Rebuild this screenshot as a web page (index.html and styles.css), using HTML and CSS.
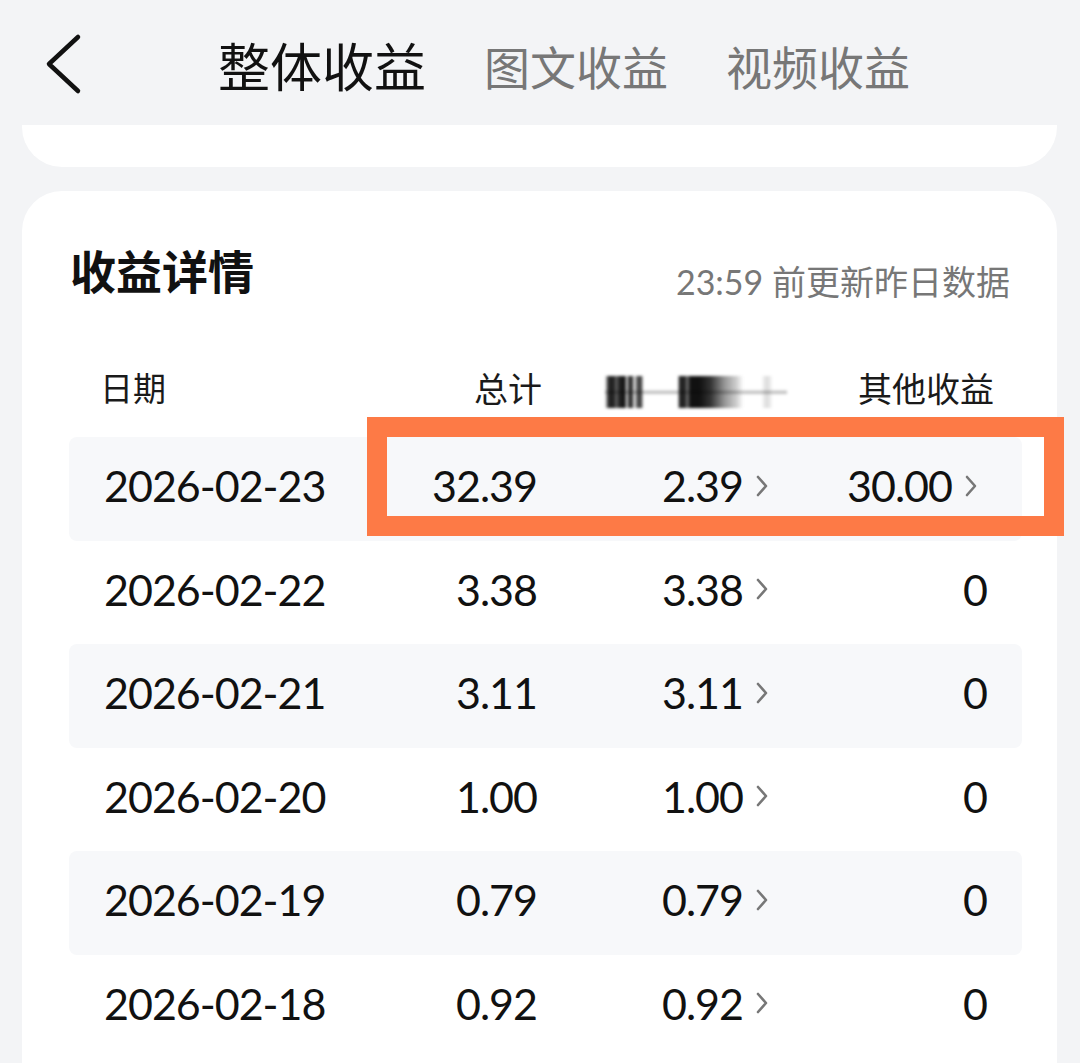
FILE: index.html
```html
<!DOCTYPE html>
<html lang="zh-CN">
<head>
    <meta charset="UTF-8">
    <meta name="viewport" content="width=device-width, initial-scale=1.0">
    <title>收益详情</title>
    <link rel="stylesheet" href="styles.css">
</head>
<body>

<div class="page">
    <!-- Top navigation with tabs -->
    <header class="topbar">
        <svg class="back" width="40" height="64" viewBox="0 0 40 64">
            <path d="M34 5 L5 32 L34 59" fill="none" stroke="#111" stroke-width="4.5" stroke-linecap="round" stroke-linejoin="round"/>
        </svg>
        <nav class="tabs">
            <span class="tab active">整体收益</span>
            <span class="tab">图文收益</span>
            <span class="tab">视频收益</span>
        </nav>
    </header>

    <div class="summary-card"></div>

    <div class="detail-card">
        <div class="detail-head">
            <h2 class="detail-title">收益详情</h2>
            <span class="detail-note">23:59 前更新昨日数据</span>
        </div>

        <div class="thead">
            <div class="th th-date">日期</div>
            <div class="th th-num">总计</div>
            <div class="th th-num"><span class="masked"></span></div>
            <div class="th th-num th-last">其他收益</div>
        </div>

        <div id="rows"></div>
    </div>

    <!-- highlight box drawn over the first row -->
    <div class="highlight"></div>
</div>

<script>
const data = [
    ['2026-02-23', '32.39', '2.39', '30.00'],
    ['2026-02-22', '3.38', '3.38', '0'],
    ['2026-02-21', '3.11', '3.11', '0'],
    ['2026-02-20', '1.00', '1.00', '0'],
    ['2026-02-19', '0.79', '0.79', '0'],
    ['2026-02-18', '0.92', '0.92', '0']
];

const chevron = '<svg class="chev" width="12" height="22" viewBox="0 0 12 22"><path d="M2 2 L10 11 L2 20" fill="none" stroke="#777" stroke-width="2.6" stroke-linecap="round" stroke-linejoin="round"/></svg>';

function renderRows() {
    const box = document.getElementById('rows');
    box.innerHTML = '';
    data.forEach((r, i) => {
        const row = document.createElement('div');
        row.classList.add('row');
        if (i % 2 === 0) row.classList.add('striped');
        const other = r[3] === '0'
            ? `<div class="td td-num">0</div>`
            : `<div class="td td-num td-other">${r[3]}${chevron}</div>`;
        row.innerHTML = `
            <div class="td td-date">${r[0]}</div>
            <div class="td td-num">${r[1]}</div>
            <div class="td td-num">${r[2]}${chevron}</div>
            ${other}
        `;
        box.appendChild(row);
    });
}

renderRows();
</script>

</body>
</html>
```

FILE: styles.css
```css
body {
    margin: 0;
    padding: 0;
    background-color: #f3f4f6;
    font-family: "Noto Sans CJK SC", "Noto Sans", sans-serif;
    color: #111;
}
.page {
    position: relative;
    width: 1080px;
    height: 1063px;
    overflow: hidden;
}
.topbar {
    height: 125px;
    display: flex;
    align-items: center;
    padding-top: 6px;
    box-sizing: border-box;
}
.back {
    margin-left: 44px;
    margin-top: -4px;
    flex: none;
}
.tabs {
    display: flex;
    align-items: center;
    gap: 58px;
    margin-left: 134px;
}
.tab {
    font-size: 46px;
    color: #777;
    line-height: 1.2;
}
.tab.active {
    font-size: 52px;
    color: #111;
}
.summary-card {
    margin: 0 23px 0 22px;
    height: 42px;
    background-color: #fff;
    border-radius: 0 0 40px 40px;
}
.detail-card {
    margin: 24px 23px 0 22px;
    padding: 51px 35px 0 47px;
    background-color: #fff;
    border-radius: 40px 40px 0 0;
    height: 900px;
}
.detail-head {
    display: flex;
    justify-content: space-between;
    align-items: flex-start;
    height: 54px;
}
.detail-title {
    margin: 0 0 0 1px;
    font-size: 46px;
    line-height: 54px;
    font-weight: 700;
    color: #111;
}
.detail-note {
    margin-top: 20px;
    margin-right: 12px;
    font-family: Lato, "Noto Sans CJK SC", sans-serif;
    font-size: 34px;
    line-height: 40px;
    color: #777;
}
.thead, .row {
    display: grid;
    grid-template-columns: 262px 173px 233px 1fr;
    align-items: center;
    padding: 0 35px 0 33px;
}
.thead {
    margin-top: 47px;
    height: 94px;
    padding-bottom: 6px;
    box-sizing: border-box;
}
.th {
    font-size: 34px;
    color: #1a1a1a;
}
.th-date {
    margin-left: -2px;
    font-size: 33px;
}
.th-num {
    text-align: right;
    margin-right: -5px;
}
.th-last {
    margin-right: -7px;
}
.masked {
    display: inline-block;
    width: 182px;
    height: 32px;
    margin-right: -12px;
    vertical-align: middle;
    filter: blur(1.4px);
    background:
        linear-gradient(180deg, transparent 44%, rgba(0,0,0,0.25) 48%, rgba(0,0,0,0.25) 54%, transparent 58%),
        linear-gradient(90deg,
            transparent 0, #222 2%, #222 5%, #666 6%, #222 8%, #111 11%, transparent 12%,
            #333 13%, #333 15%, transparent 16%, #444 18%, #444 20%, transparent 21%,
            transparent 40%, #222 41%, #222 44%, #777 45%, #111 47%, #111 52%,
            #333 58%, #999 66%, #ccc 72%, transparent 76%,
            transparent 86%, rgba(0,0,0,0.12) 88%, rgba(0,0,0,0.12) 90%, transparent 92%);
}
.row {
    height: 103.5px;
    border-radius: 8px;
    padding-bottom: 6px;
    box-sizing: border-box;
}
.row.striped {
    background-color: #f7f8fa;
}
.td {
    font-family: Lato, "Noto Sans", sans-serif;
    font-size: 43px;
    letter-spacing: -1px;
    color: #111;
    white-space: nowrap;
}
.td-date {
    padding-left: 2px;
}
.td-num {
    display: flex;
    justify-content: flex-end;
    align-items: center;
}
.chev {
    margin-left: 13px;
    margin-right: 2px;
    flex: none;
}
.td-other .chev {
    margin-right: 10px;
}
.highlight {
    position: absolute;
    left: 367px;
    top: 417px;
    width: 697px;
    height: 119px;
    box-sizing: border-box;
    border: 20px solid #fd7a46;
}
```
